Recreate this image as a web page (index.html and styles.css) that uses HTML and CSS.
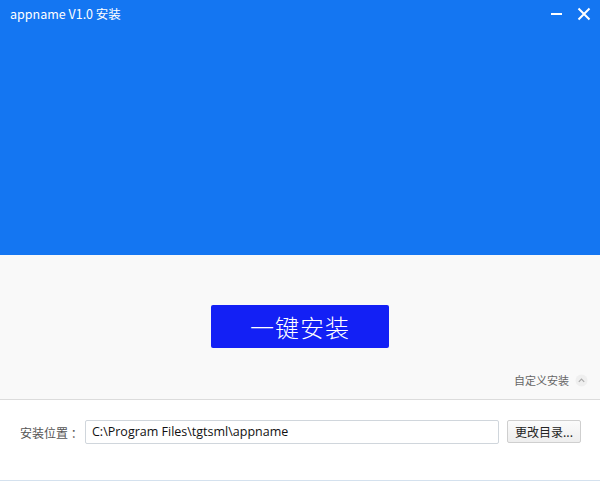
FILE: index.html
```html
<!DOCTYPE html>
<html lang="zh">
<head>
<meta charset="utf-8">
<title>appname V1.0 安装</title>
<link rel="stylesheet" href="styles.css">
</head>
<body>
<div class="window">
  <header class="banner">
    <div class="titlebar">
      <span class="title">appname V1.0 安装</span>
      <div class="controls">
        <svg class="ctl" width="14" height="14" viewBox="0 0 14 14"><rect x="1" y="6" width="11" height="2" fill="#fff"/></svg>
        <svg class="ctl" width="14" height="14" viewBox="0 0 14 14"><path d="M1.5 1.5 L12.5 12.5 M12.5 1.5 L1.5 12.5" stroke="#fff" stroke-width="2"/></svg>
      </div>
    </div>
  </header>
  <main class="stage">
    <button class="install">一键安装</button>
    <div class="custom">
      <span>自定义安装</span>
      <svg width="13" height="13" viewBox="0 0 13 13"><circle cx="6.5" cy="6.5" r="6" fill="#efefef"/><path d="M3.8 7.8 L6.5 5.1 L9.2 7.8" stroke="#aaa" stroke-width="1.2" fill="none"/></svg>
    </div>
  </main>
  <footer class="options">
    <div class="pathrow">
      <label class="plabel">安装位置 ：</label>
      <div class="pathinput">C:\Program Files\tgtsml\appname</div>
      <button class="browse">更改目录...</button>
    </div>
  </footer>
</div>
</body>
</html>
```
FILE: styles.css
```css
* { box-sizing: border-box; }
html, body { margin: 0; padding: 0; }
body {
  width: 600px;
  height: 481px;
  overflow: hidden;
  font-family: "Noto Sans CJK SC", "Noto Sans", sans-serif;
  background: #fff;
}
.window {
  display: flex;
  flex-direction: column;
  height: 481px;
}
.banner {
  height: 255px;
  background: #1476f2;
}
.titlebar {
  height: 28px;
  display: flex;
  align-items: center;
  justify-content: space-between;
  padding: 0 9px 0 10px;
}
.title {
  color: #fff;
  font-family: "Noto Sans CJK SC", sans-serif;
  font-size: 12.5px;
  line-height: 28px;
}
.controls {
  display: flex;
  gap: 13px;
  align-items: center;
}
.ctl { display: block; }
.stage {
  height: 145px;
  background: #f9f9f9;
  border-bottom: 1px solid #dcdcdc;
  display: flex;
  flex-direction: column;
  align-items: center;
  padding-top: 50px;
}
.install {
  width: 178px;
  height: 43px;
  background: #1320f5;
  border: none;
  border-radius: 2px;
  color: #fff;
  font-family: "Noto Sans CJK SC", sans-serif;
  font-weight: 300;
  font-size: 24px;
  letter-spacing: 1px;
  padding: 0;
  cursor: pointer;
}
.custom {
  align-self: flex-end;
  margin-top: 24px;
  margin-right: 12px;
  display: flex;
  align-items: center;
  gap: 6px;
  color: #666;
  font-size: 11px;
  line-height: 16px;
}
.custom svg { display: block; }
.options {
  flex: 1;
  border-bottom: 1px solid #d4e1ee;
  padding: 20px 19px 0 20px;
}
.pathrow {
  display: flex;
  align-items: center;
  height: 24px;
}
.plabel {
  color: #555;
  font-size: 12px;
  width: 65px;
  white-space: nowrap;
}
.pathinput {
  width: 414px;
  height: 24px;
  border: 1px solid #d0d6dc;
  border-radius: 2px;
  background: #fff;
  font-family: "Open Sans", "Liberation Sans", sans-serif;
  font-size: 12.5px;
  color: #111;
  line-height: 22px;
  padding-left: 6px;
}
.browse {
  margin-left: 8px;
  width: 74px;
  height: 23px;
  border: 1px solid #cfcfcf;
  border-radius: 2px;
  background: linear-gradient(#fbfbfb, #eeeeee);
  font-family: "Noto Sans CJK SC", sans-serif;
  font-size: 12px;
  color: #222;
  padding: 0;
  margin-top: -1px;
}
```
